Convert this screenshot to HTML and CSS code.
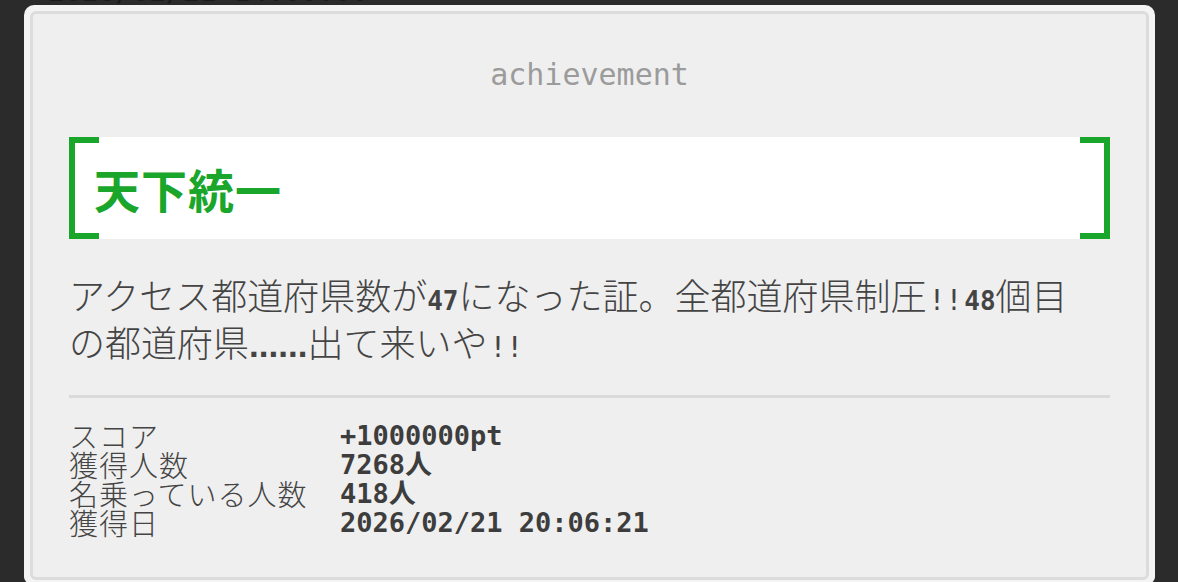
FILE: index.html
```html
<!DOCTYPE html>
<html lang="ja">
<head>
    <meta charset="UTF-8">
    <meta name="viewport" content="width=device-width, initial-scale=1.0">
    <title>achievement</title>
    <link rel="stylesheet" href="styles.css">
</head>
<body>
    <div class="prev"><span>2026/02/21 14:00:00</span></div>
    <div class="card">
        <div class="panel">
            <h2 class="kind">achievement</h2>
            <div class="title">
                <h1>天下統一</h1>
            </div>
            <p class="desc">アクセス都道府県数が<b>47</b>になった証。全都道府県制圧<b class="bang">!!</b><b>48</b>個目<br>の都道府県<b class="dots">......</b>出て来いや<b class="bang">!!</b></p>
            <hr class="rule">
            <dl class="stats">
                <dt>スコア</dt><dd>+1000000pt</dd>
                <dt>獲得人数</dt><dd>7268人</dd>
                <dt>名乗っている人数</dt><dd>418人</dd>
                <dt>獲得日</dt><dd>2026/02/21 20:06:21</dd>
            </dl>
        </div>
    </div>
</body>
</html>
```

FILE: styles.css
```css
body {
    margin: 0;
    height: 582px;
    overflow: hidden;
    background-color: #2b2b2b;
    font-family: "Noto Sans CJK JP", sans-serif;
    color: #444;
}
.prev {
    height: 5px;
    overflow: hidden;
    padding-left: 48px;
    font-family: "DejaVu Sans Mono", monospace;
    font-size: 28px;
    color: #1a1a1a;
}
.prev span {
    display: block;
    margin-top: -22px;
    line-height: 28px;
}
.card {
    box-sizing: border-box;
    width: 1131px;
    height: 578px;
    margin-left: 24px;
    padding: 6px 6px 3px;
    background-color: #f4f4f4;
    border-radius: 10px 10px 6px 6px;
}
.panel {
    box-sizing: border-box;
    height: 569px;
    padding: 43px 36px 0;
    border: 3px solid #dcdcdc;
    border-radius: 6px;
    background-color: #efefef;
}
.kind {
    margin: 0;
    text-align: center;
    font-family: "DejaVu Sans Mono", monospace;
    font-size: 30px;
    line-height: 36px;
    font-weight: normal;
    color: #9b9b9b;
}
.title {
    position: relative;
    display: flex;
    align-items: center;
    height: 102px;
    margin-top: 44px;
    padding-left: 25px;
    background-color: #fff;
}
.title::before,
.title::after {
    content: "";
    position: absolute;
    top: 0;
    bottom: 0;
    width: 24px;
    border: 6px solid #19a62b;
}
.title::before {
    left: 0;
    border-right: 0;
}
.title::after {
    right: 0;
    border-left: 0;
}
.title h1 {
    margin: 0;
    font-size: 46px;
    font-weight: bold;
    letter-spacing: 1px;
    color: #19a62b;
}
.desc {
    margin: 32px 0 0;
    font-size: 36px;
    line-height: 47px;
    font-weight: 300;
    color: #444;
}
.desc b {
    line-height: 0;
    font-family: "DejaVu Sans Mono", monospace;
    font-size: 26px;
    font-weight: bold;
}
.desc b.bang {
    font-size: 28px;
    font-weight: normal;
    padding: 0 2px;
}
.desc b.dots {
    font-family: "Liberation Sans", sans-serif;
    font-size: 35px;
}
.rule {
    height: 3px;
    margin: 30px 0 0;
    border: 0;
    background-color: #dadada;
}
.stats {
    display: grid;
    grid-template-columns: 271px 1fr;
    margin: 23px 0 0;
    font-size: 29px;
    line-height: 29px;
}
.stats dt {
    font-weight: 300;
    letter-spacing: 1px;
    color: #444;
}
.stats dd {
    margin: 0;
    font-family: "DejaVu Sans Mono", "Noto Sans CJK JP", monospace;
    font-size: 27px;
    font-weight: bold;
    color: #3d3d3d;
}
```
